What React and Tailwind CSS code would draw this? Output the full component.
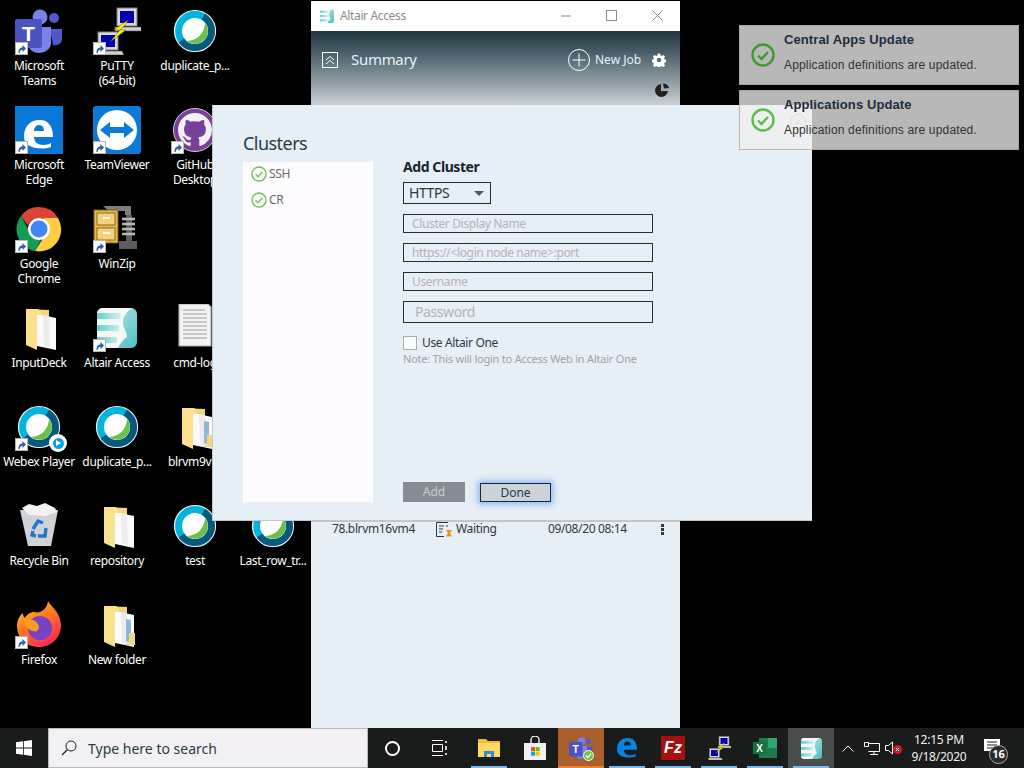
import React from "react";
import { VscGithubInverted } from "react-icons/vsc";

const Shortcut = () => (
  <span className="absolute left-0 bottom-0 w-[13px] h-[13px] bg-white border border-[#b5b5b5] flex items-center justify-center">
    <svg viewBox="0 0 11 11" className="w-[11px] h-[11px]">
      <path d="M2.5 10 C2.5 6 4 4.5 6.5 4.5 L6.5 2 L10 5.5 L6.5 9 L6.5 6.7 C5 6.7 4 7.5 3.6 10 Z" fill="#2a5ea8" />
    </svg>
  </span>
);

const Webex = () => (
  <svg viewBox="0 0 48 48" className="w-12 h-12">
    <circle cx="24" cy="24" r="20.5" fill="#00b4e1" stroke="#f2f2f2" strokeWidth="1.2" />
    <path d="M32.25 9.7 A16.5 16.5 0 1 1 10.5 33.5" fill="none" stroke="#075a7d" strokeWidth="7" />
    <circle cx="24" cy="24" r="13" fill="#fff" />
    <path d="M34 16 A12.8 12.8 0 0 1 16 34 A18.2 18.2 0 0 0 34 16 Z" fill="#6cc04a" />
  </svg>
);

const Folder = ({ pages }) => (
  <svg viewBox="0 0 48 48" className="w-12 h-12">
    <g transform="translate(2 2)">
      <path d="M9 3 L32 4 L32 33 L9 33 Z" fill="#f3d77e" />
      <path d="M20 8 L39 12 L39 44 L20 40 Z" fill="#fbfbfb" />
      <path d="M26 9 L32 10 L33 41 L27 40 Z" fill="#ececec" />
      {pages && <path d="M31 16 L36 17 L36 40 L31 38 Z" fill="#8db8d8" />}
      {pages && <path d="M34 30 L40 30 L40 42 L28 42 L34 40 Z" fill="#f3d77e" />}
      <path d="M9 3 L21 3 L24 6 L24 9 L20 9 L20 44 L9 39 Z" fill="#fbe08e" />
    </g>
  </svg>
);

const Teams = ({ small }) => (
  <svg viewBox="0 0 48 48" className={small ? "w-6 h-6" : "w-12 h-12"}>
    <circle cx="39" cy="11" r="5" fill="#5059c9" />
    <path d="M35 22 H47 V32 C47 36 43 39 38 38 Z" fill="#5059c9" />
    <circle cx="25" cy="10" r="7.5" fill="#7b83eb" />
    <path d="M13 20 H36 V36 C36 42 30 46 24 46 C18 46 13 42 13 36 Z" fill="#7b83eb" />
    <rect x="0" y="12" width="27" height="29" rx="2" fill="#4b53bc" />
    <text x="13.5" y="34" textAnchor="middle" fontFamily="Liberation Sans, sans-serif" fontWeight="700" fontSize="21" fill="#fff">T</text>
  </svg>
);

const Monitor = ({ x, y }) => (
  <g transform={`translate(${x} ${y})`}>
    <rect x="0" y="0" width="20" height="18" fill="#d9d9d9" stroke="#7a7a7a" strokeWidth="1" />
    <rect x="3" y="3" width="14" height="12" fill="#0000b0" />
    <path d="M-2 19 H24 L26 23 H-2 Z" fill="#cfcfcf" stroke="#555" strokeWidth=".6" />
  </g>
);

const Putty = ({ small }) => (
  <svg viewBox="0 0 48 48" className={small ? "w-6 h-6" : "w-12 h-12"}>
    <Monitor x={24} y={1} />
    <Monitor x={5} y={25} />
    <path d="M35 13 L21 23 L27 23 L17 35 L33 23 L27 23 L33 17 Z" fill="#fff200" stroke="#333" strokeWidth=".4" />
  </svg>
);

const Edge = ({ bare }) => (
  <svg viewBox={bare ? "6 11 35 35" : "0 0 48 48"} className={bare ? "w-6 h-6" : "w-12 h-12"}>
    {!bare && <rect width="48" height="48" fill="#0a78d7" />}
    <path
      fillRule="evenodd"
      d="M9 31 C9 20 15 14 25 14 C33 14 38 20 38 31 L19 31 C19 36 23 39 28 39 C31 39 34 38 36 37 L36 41 C33 42 30 42.5 27 42.5 C16 42.5 9 38 9 31 Z M19 25 L29 25 C29 21 27 19 24 19 C21 19 19 22 19 25 Z"
      fill={bare ? "#0a84e0" : "#fff"}
    />
  </svg>
);

const TeamViewer = () => (
  <svg viewBox="0 0 48 48" className="w-12 h-12">
    <rect width="48" height="48" rx="3" fill="#0b79d6" />
    <circle cx="24" cy="24" r="20" fill="#fff" />
    <path d="M7 24 L17 16 V21 H31 V16 L41 24 L31 32 V27 H17 V32 Z" fill="#0b79d6" />
  </svg>
);

const GitHubDesktop = () => (
  <span className="w-12 h-12 flex items-center justify-center">
    <span className="w-[44px] h-[44px] rounded-full bg-[#7a3f98] border border-[#cfcfcf] flex items-center justify-center">
      <VscGithubInverted className="w-[34px] h-[34px] text-[#f2f2f2]" />
    </span>
  </span>
);

const Chrome = () => (
  <svg viewBox="0 0 48 48" className="w-12 h-12">
    <path d="M24 2 A22 22 0 0 1 43 13 L24 13 C18 13 14 17 13 21 L6 11 A22 22 0 0 1 24 2 Z" fill="#db4437" />
    <path d="M6 11 L16 29 C18 33 22 35 26 35 L20 46 A22 22 0 0 1 6 11 Z" fill="#0f9d58" />
    <path d="M43 13 A22 22 0 0 1 20 46 L30 30 C33 25 33 18 28 13 Z" fill="#ffcd40" />
    <circle cx="24" cy="24" r="11" fill="#fff" />
    <circle cx="24" cy="24" r="8.5" fill="#4285f4" />
  </svg>
);

const WinZip = () => (
  <svg viewBox="0 0 48 48" className="w-12 h-12">
    <path d="M10 1 H38 V10 H32 V6 H16 Z" fill="#7d7d7d" />
    <path d="M33 10 H39 V36 H44 V44 H26 V36 H33 Z" fill="#5d5d5d" />
    <path d="M29 14 H42 M29 19 H42 M29 24 H42 M29 29 H42" stroke="#b8b8b8" strokeWidth="2.4" />
    <rect x="1" y="5" width="24" height="33" fill="#e9b949" stroke="#7a5c18" />
    <rect x="4" y="8" width="18" height="12" fill="#f3d27d" stroke="#8c6a1c" />
    <rect x="4" y="23" width="18" height="12" fill="#f3d27d" stroke="#8c6a1c" />
    <rect x="10" y="12" width="7" height="2" fill="#fff" />
    <rect x="10" y="27" width="7" height="2" fill="#fff" />
  </svg>
);

const Altair = ({ className = "w-[40px] h-[40px]" }) => (
  <svg viewBox="0 0 40 40" className={className}>
    <defs>
      <linearGradient id="altairStripe" x1="0" y1="0" x2="1" y2="0">
        <stop offset="0" stopColor="#5fcfc8" />
        <stop offset="1" stopColor="#d5f1ee" />
      </linearGradient>
      <linearGradient id="altairBody" x1="0" y1="0" x2="1" y2="1">
        <stop offset="0" stopColor="#c4ecea" />
        <stop offset="1" stopColor="#4fbfc4" />
      </linearGradient>
    </defs>
    <rect width="40" height="40" rx="6" fill="url(#altairBody)" />
    <path d="M0 6 C0 2 3 0 6 0 H36 C29 3 26 9 26 15 C26 20 30 24 30 29 C27 31 23 35 21 40 H6 C3 40 0 38 0 34 Z" fill="#f6f8f8" />
    <path d="M0 5 H24 V11 H0 Z M0 17 H22 V23 H0 Z M0 29 H20 V35 H0 Z" fill="url(#altairStripe)" />
  </svg>
);

const Doc = () => (
  <svg viewBox="0 0 48 48" className="w-12 h-12">
    <path d="M8 0 H37 L40 3 L40 42 H8 Z" fill="#f2f2f2" stroke="#a9a9a9" strokeWidth="1.2" />
    <path d="M12 6 H34 M12 10 H36 M12 14 H36 M12 18 H36 M12 22 H36 M12 26 H36 M12 30 H36 M12 34 H36" stroke="#9a9a9a" strokeWidth="1" />
  </svg>
);

const RecycleBin = () => (
  <svg viewBox="0 0 48 48" className="w-12 h-12">
    <path d="M5 8 H43 L36 44 H13 Z" fill="#d0d3d6" />
    <path d="M7 6 L14 2 L22 4 L30 1 L40 6 L42 10 L30 14 L14 13 Z" fill="#f2f2f2" />
    <path d="M18 27 L23 19 L28 21 M31 26 L30 34 L23 34 M18 29 L17 33 L21 34" fill="none" stroke="#2178c9" strokeWidth="3.4" />
  </svg>
);

const Firefox = () => (
  <svg viewBox="0 0 48 48" className="w-12 h-12">
    <defs>
      <linearGradient id="fx" x1="0" y1="0" x2="0.6" y2="1">
        <stop offset="0" stopColor="#ffe226" />
        <stop offset="0.5" stopColor="#ff7a1f" />
        <stop offset="1" stopColor="#ff2d55" />
      </linearGradient>
    </defs>
    <path d="M33 0 C36 6 45 10 46 24 C46 37 36 46 24 46 C11 46 2 37 2 25 C2 19 5 14 8 12 C8 15 9 16 10 17 C12 13 16 11 19 11 C26 13 32 8 33 0 Z" fill="url(#fx)" />
    <circle cx="25" cy="27" r="12" fill="#7543c4" />
    <path d="M9 18 C14 17 20 19 22 22 C26 26 23 32 18 30 C13 29 9 24 9 18 Z" fill="#ff9a1f" />
  </svg>
);

const Check = ({ size = "w-4 h-4", color = "#6cc24a", sw = 2 }) => (
  <svg viewBox="0 0 24 24" className={size}>
    <circle cx="12" cy="12" r="10.5" fill="none" stroke={color} strokeWidth={sw} />
    <path d="M7 12.5 L10.5 16 L17 9" fill="none" stroke={color} strokeWidth={sw} />
  </svg>
);

const rows = [
  [{ icon: <Teams />, label: "Microsoft\nTeams", sc: true }, { icon: <Putty />, label: "PuTTY\n(64-bit)", sc: true }, { icon: <Webex />, label: "duplicate_p..." }],
  [{ icon: <Edge />, label: "Microsoft\nEdge", sc: true }, { icon: <TeamViewer />, label: "TeamViewer", sc: true }, { icon: <GitHubDesktop />, label: "GitHub\nDesktop", sc: true }],
  [{ icon: <Chrome />, label: "Google\nChrome", sc: true }, { icon: <WinZip />, label: "WinZip", sc: true }, null],
  [{ icon: <Folder />, label: "InputDeck" }, { icon: <Altair />, label: "Altair Access", sc: true }, { icon: <Doc />, label: "cmd-log" }],
  [{ icon: <Webex />, label: "Webex Player", sc: true, play: true }, { icon: <Webex />, label: "duplicate_p..." }, { icon: <Folder pages />, label: "blrvm9vm" }],
  [{ icon: <RecycleBin />, label: "Recycle Bin" }, { icon: <Folder />, label: "repository" }, { icon: <Webex />, label: "test" }, { icon: <Webex />, label: "Last_row_tr..." }],
  [{ icon: <Firefox />, label: "Firefox", sc: true }, { icon: <Folder pages />, label: "New folder" }, null],
];

const DesktopIcon = ({ item }) => (
  <div className="flex flex-col items-center w-[78px] text-center">
    <div className="relative w-12 h-12 flex items-center justify-center">
      {item.icon}
      {item.sc && <Shortcut />}
      {item.play && (
        <span className="absolute right-[-4px] bottom-[-1px] w-[18px] h-[18px] rounded-full bg-white flex items-center justify-center">
          <span className="w-[11px] h-[11px] rounded-full bg-[#0a9fe0] flex items-center justify-center">
            <span className="border-l-[5px] border-l-white border-y-[3px] border-y-transparent ml-[1px]" />
          </span>
        </span>
      )}
    </div>
    <div className="mt-[3px] text-[12px] leading-[15px] text-white whitespace-pre tracking-[-0.03em]">{item.label}</div>
  </div>
);

const Field = ({ placeholder, className }) => (
  <div className={`border border-[#1b2f3f] w-[250px] flex items-center text-[#b4b4b8] tracking-[-0.03em] ${className}`}>{placeholder}</div>
);

const TaskItem = ({ children, active, line, bg }) => (
  <div className={`relative w-[46px] h-10 flex items-center justify-center ${bg || ""}`}>
    {children}
    {line && <span className={`absolute bottom-0 h-[2px] ${active ? "inset-x-0 bg-[#f0802c]" : "inset-x-[5px] bg-[#76b9ed]"}`} />}
  </div>
);

export default function App() {
  return (
    <div className="relative w-[1024px] h-[768px] overflow-hidden bg-black font-['Noto_Sans','Open_Sans',sans-serif]">
      {/* desktop icons */}
      <div className="grid grid-cols-[repeat(4,78px)] auto-rows-[99px] pt-[7px]">
        {rows.map((row, r) =>
          [0, 1, 2, 3].map((c) => (
            <div key={`${r}-${c}`}>{row[c] && <DesktopIcon item={row[c]} />}</div>
          ))
        )}
      </div>

      {/* Altair Access main window */}
      <div className="absolute left-[311px] top-[1px] w-[369px] h-[727px] flex flex-col bg-[#e6eef6]">
        <div className="h-[30px] bg-white flex items-center pl-[9px]">
          <Altair className="w-[14px] h-[14px]" />
          <span className="ml-[6px] text-[12px] text-[#8b8b8b] tracking-[-0.03em]">Altair Access</span>
          <div className="ml-auto flex items-center">
            <svg viewBox="0 0 46 30" className="w-[46px] h-[30px]"><path d="M19 15 H29" stroke="#8a8a8a" /></svg>
            <svg viewBox="0 0 46 30" className="w-[46px] h-[30px]"><rect x="18.5" y="9.5" width="10" height="10" fill="none" stroke="#8a8a8a" /></svg>
            <svg viewBox="0 0 46 30" className="w-[46px] h-[30px]"><path d="M18.5 9.5 L28.5 19.5 M28.5 9.5 L18.5 19.5" stroke="#8a8a8a" /></svg>
          </div>
        </div>
        <div className="h-[74px] bg-gradient-to-b from-[#1e3540] to-[#c9d1d6]">
          <div className="flex items-center h-[58px] pl-[11px] pr-[14px]">
            <svg viewBox="0 0 16 16" className="w-4 h-4">
              <rect x=".5" y=".5" width="15" height="15" fill="none" stroke="#fff" />
              <path d="M4 8 L8 4.5 L12 8 M4 12 L8 8.5 L12 12" fill="none" stroke="#fff" />
            </svg>
            <span className="ml-[13px] -mt-[2px] text-[15px] text-[#e3f1f6] tracking-[-0.02em]">Summary</span>
            <svg viewBox="0 0 22 22" className="ml-auto w-[22px] h-[22px]">
              <circle cx="11" cy="11" r="10.5" fill="none" stroke="#fff" />
              <path d="M11 4.5 V17.5 M4.5 11 H17.5" stroke="#fff" />
            </svg>
            <span className="ml-[5px] w-[45px] whitespace-nowrap text-[12px] text-[#e3f1f6]">New Job</span>
            <svg viewBox="0 0 24 24" className="ml-[12px] w-[14px] h-[14px]" fill="#fff">
              <path d="M10 1h4l.6 3 2.4 1 2.6-1.7 2.8 2.8-1.7 2.6 1 2.4 3 .6v4l-3 .6-1 2.4 1.7 2.6-2.8 2.8-2.6-1.7-2.4 1-.6 3h-4l-.6-3-2.4-1-2.6 1.7-2.8-2.8 1.7-2.6-1-2.4-3-.6v-4l3-.6 1-2.4L1.6 6.1l2.8-2.8L7 5l2.4-1zM12 8a4 4 0 1 0 0 8 4 4 0 0 0 0-8z" />
            </svg>
          </div>
          <div className="flex justify-end pr-[11px] -mt-[6px]">
            <svg viewBox="0 0 14 14" className="w-[14px] h-[14px]" fill="#222">
              <path d="M6 1 V8 H13 A6.5 6.5 0 1 1 6 1 Z" />
              <path d="M8 0.5 L9 5.5 L14 5 A6 6 0 0 0 8 0.5 Z" />
            </svg>
          </div>
        </div>
        <div className="mt-[416px] border-t border-[#c4c4c4] flex items-center h-[14px] pl-[21px] text-[12px] text-[#2b3a46] tracking-[-0.03em] box-content">
          <span className="w-[104px]">78.blrvm16vm4</span>
          <svg viewBox="0 0 17 15" className="w-[17px] h-[15px]">
            <path d="M.5 14.5 V.5 H12 M.5 14.5 H8 M3 4 H8 M3 7 H7 M3 10 H6 M10 4 H12" fill="none" stroke="#2b3a46" />
            <path d="M10 8 H16 L14 11 L16 14.5 H10 L12 11 Z" fill="#f08a1d" />
          </svg>
          <span className="ml-[3px] w-[92px]">Waiting</span>
          <span className="w-[113px]">09/08/20 08:14</span>
          <span className="flex flex-col gap-[1px]">
            <span className="w-[3px] h-[3px] bg-[#2b3a46]" />
            <span className="w-[3px] h-[3px] bg-[#2b3a46]" />
            <span className="w-[3px] h-[3px] bg-[#2b3a46]" />
          </span>
        </div>
      </div>

      {/* Clusters dialog */}
      <div className="absolute left-[212px] top-[105px] w-[600px] h-[416px] bg-[#e6eef6] border-b border-[#c4c8cc] border-l border-l-[#c4c8cc] pl-[30px] flex">
        <div className="w-[130px] flex flex-col">
          <h1 className="text-[18px] leading-[24px] mt-[26px] text-[#2b3a46] font-normal tracking-[-0.03em]">Clusters</h1>
          <ul className="mt-[7px] w-[130px] h-[340px] bg-[#fefbff] pl-[8px]">
            {["SSH", "CR"].map((name) => (
              <li key={name} className="h-[24px] mb-[2px] flex items-center text-[12px] text-[#6b6b6b] tracking-[-0.03em]">
                <Check />
                <span className="ml-[2px]">{name}</span>
              </li>
            ))}
          </ul>
        </div>
        <div className="ml-[30px] w-[250px] flex flex-col items-start">
          <h2 className="mt-[52px] text-[14px] leading-[20px] font-bold text-[#16242e] tracking-[-0.03em]">Add Cluster</h2>
          <div className="mt-[5px] w-[88px] h-[22px] border border-[#1b2f3f] flex items-center pl-[5px] pr-[6px] text-[14px] leading-[18px] text-[#2b3a46] tracking-[-0.03em]">
            <span className="-mt-[1px]">HTTPS</span>
            <span className="ml-auto border-t-[5px] border-t-[#555] border-x-[5px] border-x-transparent" />
          </div>
          <Field placeholder="Cluster Display Name" className="mt-[10px] h-[19px] pl-[8px] text-[12px]" />
          <Field placeholder="https://<login node name>:port" className="mt-[10px] h-[19px] pl-[8px] text-[12px]" />
          <Field placeholder="Username" className="mt-[10px] h-[19px] pl-[8px] text-[12px]" />
          <Field placeholder="Password" className="mt-[10px] h-[22px] pl-[11px] text-[14px] leading-[18px]" />
          <div className="mt-[12px] flex items-center">
            <span className="w-[14px] h-[14px] bg-[#fbfbfd] border border-[#adadad]" />
            <span className="ml-[5px] text-[12px] leading-[15px] text-[#2b3a46] tracking-[-0.03em]">Use Altair One</span>
          </div>
          <p className="mt-[1px] text-[11px] leading-[15px] text-[#9ea4a9] whitespace-nowrap tracking-[-0.02em]">Note: This will login to Access Web in Altair One</p>
          <div className="mt-auto mb-[18px] flex items-center">
            <button className="w-[62px] h-[20px] bg-[#868c93] text-[12px] text-[#c8ccd0]">Add</button>
            <button className="ml-[15px] w-[71px] h-[19px] bg-[#ccd2d6] border border-[#15283a] text-[12px] text-[#2b3a46] shadow-[0_0_6px_2px_rgba(70,150,240,0.6)]">Done</button>
          </div>
        </div>
        <svg viewBox="0 0 16 16" className="absolute left-[577px] top-[9px] w-4 h-4">
          <circle cx="8" cy="8" r="7.5" fill="none" stroke="#9a9a9a" />
          <path d="M5 5 L11 11 M11 5 L5 11" stroke="#9a9a9a" />
        </svg>
      </div>

      {/* toasts */}
      <div className="absolute left-[739px] top-[25px] w-[280px] flex flex-col gap-[5px] font-['Liberation_Sans',sans-serif]">
        {["Central Apps Update", "Applications Update"].map((title, i) => (
          <div key={title} className="h-[60px] bg-[rgba(240,240,240,0.77)] border border-[rgba(150,150,150,0.6)] flex items-center pl-[11px]">
            <Check size="w-[24px] h-[24px]" color={i === 0 ? "#3f9a2e" : "#5bbd4c"} sw={2.4} />
            <div className="ml-[9px] flex flex-col self-start pt-[6px]">
              <span className="text-[13px] leading-[15px] font-bold text-[#1f2d3d] tracking-[0.1px]">{title}</span>
              <span className="mt-[11px] text-[12px] leading-[14px] text-[#333] tracking-[0.17px]">Application definitions are updated.</span>
            </div>
          </div>
        ))}
      </div>

      {/* taskbar */}
      <div className="absolute left-0 bottom-0 w-full h-10 bg-[#1a1c1c] flex items-center">
        <div className="w-[48px] h-10 flex items-center justify-center">
          <svg viewBox="0 0 16 16" className="w-4 h-4" fill="#fff">
            <path d="M0 2.3 L7 1.3 V7.6 H0 Z M7.8 1.2 L16 0 V7.6 H7.8 Z M0 8.4 H7 V14.7 L0 13.7 Z M7.8 8.4 H16 V16 L7.8 14.8 Z" />
          </svg>
        </div>
        <div className="w-[320px] h-10 bg-[#f3f0f5] border border-[#b9b9bb] flex items-center pl-[12px] text-[14px] text-[#2b3a46]">
          <svg viewBox="0 0 16 16" className="w-4 h-4">
            <circle cx="10" cy="6" r="5" fill="none" stroke="#222" />
            <path d="M6.5 9.5 L1 15" stroke="#222" strokeWidth="1.3" />
          </svg>
          <span className="ml-[11px]">Type here to search</span>
        </div>
        <div className="w-[48px] flex justify-center">
          <span className="w-[15px] h-[15px] rounded-full border-2 border-white" />
        </div>
        <div className="w-[48px] flex justify-center">
          <svg viewBox="0 0 16 16" className="w-4 h-4" fill="none" stroke="#fff">
            <path d="M0 .5 H11 M0 15.5 H11 M.5 4.5 H10.5 V11.5 H.5 Z" />
            <path d="M14 1 V3 M14 6 V10 M14 13 V15" strokeWidth="1.6" />
          </svg>
        </div>
        <div className="w-[2px]" />
        <TaskItem line>
          <svg viewBox="0 0 24 24" className="w-[24px] h-[24px]">
            <path d="M1 3 H9 L11 5 H23 V21 H1 Z" fill="#f2bb2e" />
            <path d="M1 7 H23 V21 H1 Z" fill="#ffd968" />
            <path d="M7 21 V15 H17 V21 H14 V18 H10 V21 Z" fill="#2f8fd0" />
          </svg>
        </TaskItem>
        <TaskItem>
          <svg viewBox="0 0 24 24" className="w-[24px] h-[24px]">
            <path d="M8 7 V4 A3 3 0 0 1 16 4 V7" fill="none" stroke="#f0f0f0" strokeWidth="1.4" />
            <path d="M1 7 H23 V24 H1 Z" fill="#f0f0f0" />
            <rect x="8" y="11" width="4" height="4" fill="#f25022" />
            <rect x="12.6" y="11" width="4" height="4" fill="#7fba00" />
            <rect x="8" y="15.6" width="4" height="4" fill="#00a4ef" />
            <rect x="12.6" y="15.6" width="4" height="4" fill="#ffb900" />
          </svg>
        </TaskItem>
        <TaskItem line active bg="bg-[#a9602c]">
          <Teams small />
          <span className="absolute left-[25px] top-[22px] w-[11px] h-[11px] rounded-full bg-[#6cc24a] border border-white flex items-center justify-center">
            <svg viewBox="0 0 10 10" className="w-[9px] h-[9px]"><path d="M2 5 L4.2 7.2 L8 3" fill="none" stroke="#fff" strokeWidth="1.4" /></svg>
          </span>
        </TaskItem>
        <TaskItem line>
          <Edge bare />
        </TaskItem>
        <TaskItem line>
          <span className="w-[24px] h-[24px] bg-[#a50f0f] flex items-center justify-center text-[16px] italic font-bold text-white font-['Liberation_Sans',sans-serif]">Fz</span>
        </TaskItem>
        <TaskItem line>
          <Putty small />
        </TaskItem>
        <TaskItem line>
          <svg viewBox="0 0 24 24" className="w-[24px] h-[24px]">
            <rect x="6" y="2" width="18" height="20" fill="#1e7a48" />
            <path d="M15 2 H24 V12 H15 Z" fill="#33a56c" />
            <rect x="0" y="6" width="13" height="12" fill="#127443" />
            <text x="6.5" y="16" textAnchor="middle" fontFamily="Liberation Sans, sans-serif" fontWeight="700" fontSize="10" fill="#fff">X</text>
          </svg>
        </TaskItem>
        <TaskItem line bg="bg-[#4a4c4c]">
          <Altair className="w-[21px] h-[21px]" />
        </TaskItem>
        <div className="w-[2px]" />
        <div className="w-[24px] flex justify-center">
          <svg viewBox="0 0 12 7" className="w-3 h-[7px]"><path d="M.5 6.5 L6 1 L11.5 6.5" fill="none" stroke="#fff" /></svg>
        </div>
        <div className="w-[24px] flex justify-center">
          <svg viewBox="0 0 16 16" className="w-4 h-4" fill="none" stroke="#fff">
            <path d="M.5 2.5 H4.5 V6.5 H.5 Z M4.5 3.5 H15.5 V11.5 H4.5 M10 11.5 V14.5 M6 14.5 H14" />
          </svg>
        </div>
        <div className="relative w-[22px] flex justify-center">
          <svg viewBox="0 0 16 16" className="w-4 h-4 -ml-[6px]" fill="none" stroke="#fff">
            <path d="M1.5 5.5 H4.5 L8.5 2 V14 L4.5 10.5 H1.5 Z" />
          </svg>
          <span className="absolute left-[9px] top-[5px] w-[9px] h-[9px] rounded-full bg-[#e81123] flex items-center justify-center">
            <svg viewBox="0 0 9 9" className="w-[9px] h-[9px]"><path d="M3 3 L6 6 M6 3 L3 6" stroke="#fff" /></svg>
          </span>
        </div>
        <div className="w-[66px] flex flex-col items-center text-[12px] leading-[20px] text-[#f0f0f0] tracking-[-0.02em]">
          <span className="mb-[-3px]">12:15 PM</span>
          <span>9/18/2020</span>
        </div>
        <div className="relative w-[46px] h-10 flex items-center justify-center">
          <svg viewBox="0 0 16 16" className="w-4 h-4 -ml-[6px] -mt-[3px]" fill="#fff">
            <path d="M0 0 H16 V12 H9 L6 15 V12 H0 Z" />
            <path d="M3 3 H13 M3 6 H13 M3 9 H10" stroke="#1a1c1c" />
          </svg>
          <span className="absolute left-[17px] top-[17px] w-[19px] h-[19px] rounded-full bg-[#2a2a2a] border border-[#aaa] flex items-center justify-center text-[11px] font-bold text-white">16</span>
        </div>
      </div>
    </div>
  );
}
